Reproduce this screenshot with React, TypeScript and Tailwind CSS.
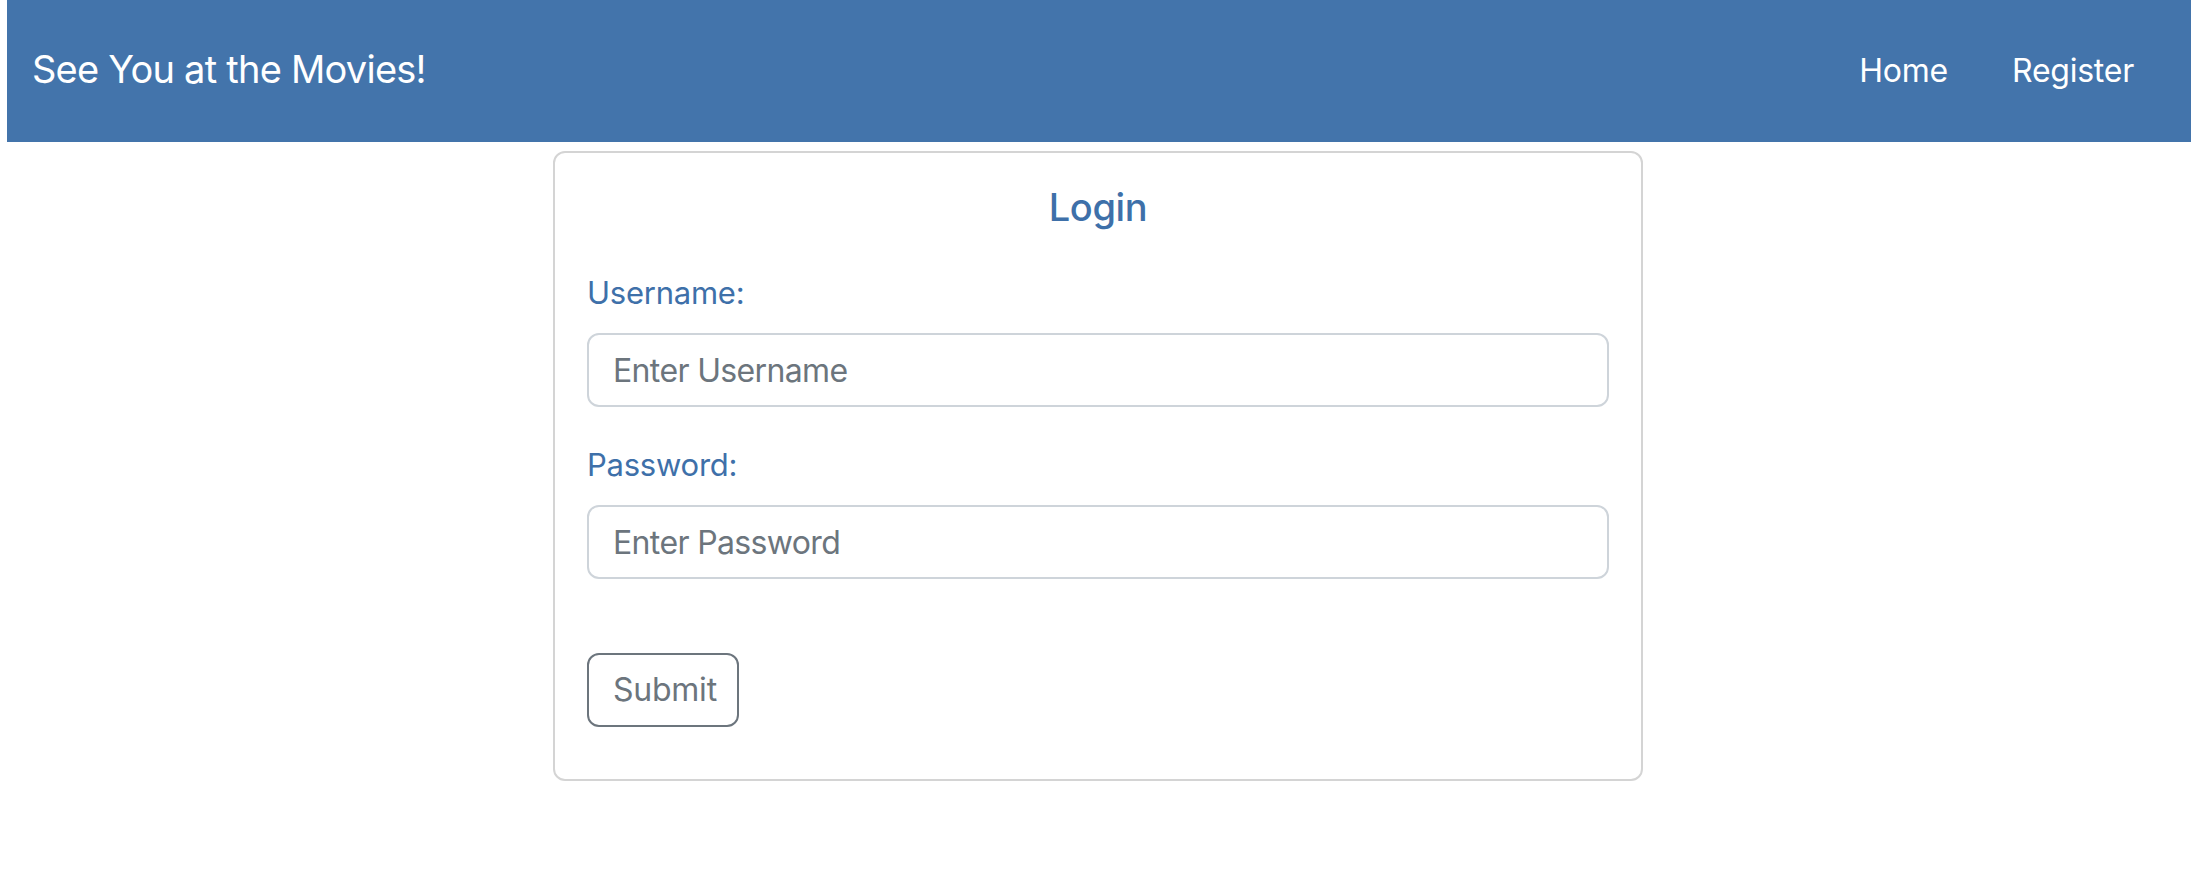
export default function App() {
  return (
    <div className="min-h-[896px] bg-white font-['Inter',sans-serif]">
      <nav className="ml-[7px] mr-[5px] flex h-[142px] items-center justify-between bg-[#4374ab] px-[25px] text-white">
        <a href="#" className="mb-[4px] text-[38px] leading-[48px] tracking-[-0.02em]">
          See You at the Movies!
        </a>
        <div className="flex tracking-[-0.015em]">
          <a href="#" className="px-[32px] text-[32px] leading-[48px]">Home</a>
          <a href="#" className="px-[32px] text-[32px] leading-[48px]">Register</a>
        </div>
      </nav>

      <div className="mx-auto mt-[9px] w-[1090px] rounded-[12px] border-2 border-[#d4d4d4] px-[32px] pb-[52px] pt-[30px] tracking-[-0.015em]">
        <h2 className="mb-[38px] text-center text-[38px] font-medium leading-[48px] tracking-[-0.01em] text-[#3e70a9]">Login</h2>
        <form onSubmit={(e) => e.preventDefault()}>
          <label className="mb-[16px] block text-[31px] leading-[48px] text-[#3e70a9]">Username:</label>
          <input
            type="text"
            placeholder="Enter Username"
            className="mb-[34px] block h-[74px] w-full rounded-[12px] border-2 border-[#ced4da] px-[24px] text-[32px] tracking-[-0.02em] placeholder:text-[#6c757d]"
          />
          <label className="mb-[16px] block text-[31px] leading-[48px] text-[#3e70a9]">Password:</label>
          <input
            type="password"
            placeholder="Enter Password"
            className="mb-[74px] block h-[74px] w-full rounded-[12px] border-2 border-[#ced4da] px-[24px] text-[32px] tracking-[-0.02em] placeholder:text-[#6c757d]"
          />
          <button
            type="submit"
            className="block h-[74px] w-[152px] rounded-[12px] border-2 border-[#6c757d] px-[24px] text-left text-[32px] leading-[48px] text-[#6c757d]"
          >
            Submit
          </button>
        </form>
      </div>
    </div>
  );
}
